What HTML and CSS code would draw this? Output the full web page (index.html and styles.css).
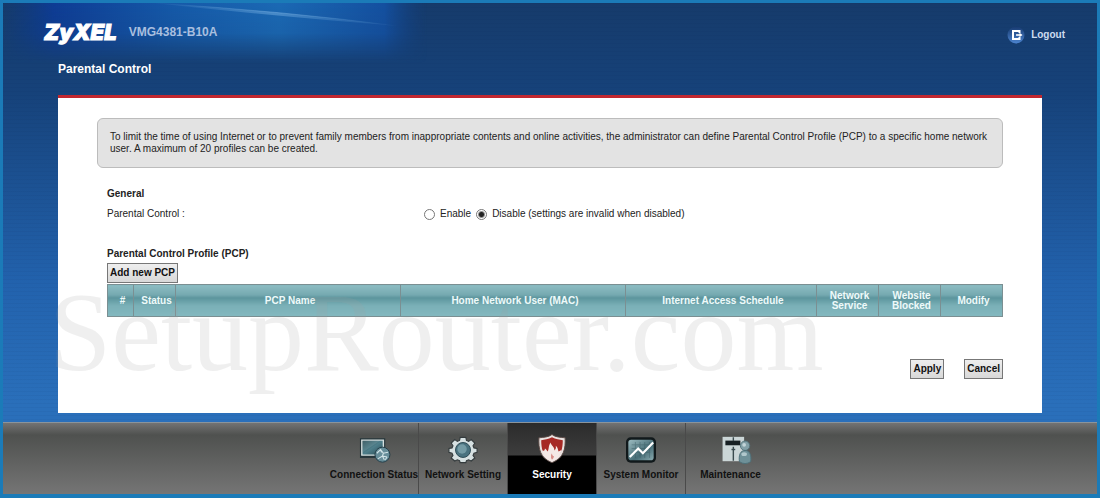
FILE: index.html
```
<!DOCTYPE html>
<html lang="en">
<head>
<meta charset="utf-8">
<title>VMG4381-B10A - Parental Control</title>
<link rel="stylesheet" href="styles.css">
</head>
<body>
<div class="frame">
  <header class="header">
    <svg class="glow" viewBox="0 0 424 60" preserveAspectRatio="none" aria-hidden="true">
      <defs>
        <linearGradient id="glowX" x1="0" x2="1" y1="0" y2="0">
          <stop offset="0" stop-color="#0b3a8c" stop-opacity="0"/>
          <stop offset=".12" stop-color="#0e3c94"/>
          <stop offset=".4" stop-color="#1559a8"/>
          <stop offset=".65" stop-color="#1b69b4"/>
          <stop offset=".9" stop-color="#1450a0"/>
          <stop offset="1" stop-color="#123f80" stop-opacity="0"/>
        </linearGradient>
        <linearGradient id="glowY" x1="0" x2="0" y1="0" y2="1">
          <stop offset="0" stop-color="#fff"/>
          <stop offset=".5" stop-color="#ddd"/>
          <stop offset="1" stop-color="#000"/>
        </linearGradient>
        <linearGradient id="ray" gradientUnits="userSpaceOnUse" x1="150" x2="395" y1="0" y2="0">
          <stop offset="0" stop-color="#7db4e4" stop-opacity="0"/>
          <stop offset=".5" stop-color="#7db4e4" stop-opacity=".45"/>
          <stop offset="1" stop-color="#7db4e4" stop-opacity="0"/>
        </linearGradient>
        <mask id="fade"><rect width="424" height="60" fill="url(#glowY)"/></mask>
      </defs>
      <rect width="424" height="60" fill="url(#glowX)" mask="url(#fade)"/>
      <path d="M150 0Q280 8 395 23Q280 14 150 0Z" fill="url(#ray)"/>
      <path d="M150 0Q280 8 395 23" fill="none" stroke="url(#ray)" stroke-width="1"/>
    </svg>
    <div class="brand">
      <span class="logo">ZyXEL</span>
      <span class="model">VMG4381-B10A</span>
    </div>
    <a class="logout" href="#">
      <svg width="18" height="18" viewBox="0 0 18 18" aria-hidden="true">
        <defs><linearGradient id="ball" x1="0" x2="0" y1="0" y2="1"><stop offset="0" stop-color="#173a70"/><stop offset="1" stop-color="#4c84cf"/></linearGradient></defs>
        <circle cx="9" cy="9" r="8.500" fill="url(#ball)"/>
        <path d="M12.500 7V5H6V13H12.500V11" fill="none" stroke="#fff" stroke-width="2"/>
        <path d="M9 9H13" stroke="#fff" stroke-width="1.600"/>
        <path d="M12.500 6.800L15.500 9L12.500 11.200Z" fill="#fff"/>
      </svg>
      <span>Logout</span>
    </a>
    <h1 class="title">Parental Control</h1>
  </header>

  <main class="panel">
    <p class="info">To limit the time of using Internet or to prevent family members from inappropriate contents and online activities, the administrator can define Parental Control Profile (PCP) to a specific home network user. A maximum of 20 profiles can be created.</p>
    <form class="form">
      <h2 class="heading">General</h2>
      <div class="row" role="radiogroup" aria-labelledby="pc-label">
        <span id="pc-label">Parental Control :</span>
        <div class="options">
          <input class="radio" type="radio" id="enable" name="pc"><label for="enable">Enable</label>
          <input class="radio" type="radio" id="disable" name="pc" checked><label for="disable">Disable (settings are invalid when disabled)</label>
        </div>
      </div>
      <h2 class="heading">Parental Control Profile (PCP)</h2>
      <button class="button add" type="button">Add new PCP</button>
      <table class="table">
        <colgroup>
          <col class="col-num"><col class="col-status"><col class="col-wide"><col class="col-wide"><col class="col-schedule"><col class="col-small"><col class="col-small"><col class="col-small">
        </colgroup>
        <thead>
          <tr><th>#</th><th>Status</th><th>PCP Name</th><th>Home Network User (MAC)</th><th>Internet Access Schedule</th><th>Network Service</th><th>Website Blocked</th><th>Modify</th></tr>
        </thead>
      </table>
      <div class="actions">
        <button class="button" type="submit">Apply</button>
        <button class="button" type="reset">Cancel</button>
      </div>
    </form>
  </main>
  <div class="watermark">SetupRouter.com</div>

  <nav class="nav">
    <a class="item" href="#">
      <svg class="icon" viewBox="0 0 32 32" aria-hidden="true">
        <defs><linearGradient id="teal" x1="0" x2="1" y1="0" y2="1"><stop offset="0" stop-color="#1f3a42"/><stop offset=".5" stop-color="#4e7f8b"/><stop offset="1" stop-color="#26454e"/></linearGradient></defs>
        <path d="M1 4H28V25H1Z" fill="#26363b"/>
        <path d="M3 6H26V22H3Z" fill="url(#teal)" stroke="#d5dfdf" stroke-width="1.500"/>
        <path d="M4 7H22L4 19Z" fill="#86adb4" opacity=".3"/>
        <circle cx="25" cy="21.500" r="8" fill="#668d99" stroke="#213b45"/>
        <path d="M19 20l4-4 3 4 5-1M20 26l5-3 2 4M26 20l-1 3 5 1M23 16l1 3M28 27l2-3" fill="none" stroke="#d2e4e8" stroke-width="1.200"/>
      </svg>
      <span>Connection Status</span>
    </a>
    <a class="item" href="#">
      <svg class="icon" viewBox="0 0 32 32" aria-hidden="true">
        <path d="M13 3h6l.7 3.300 2.300 1 2.800-1.900 3.800 3.800-1.900 2.800 1 2.300L31 15v4l-3.300 1-1 2.300 1.900 2.800-3.800 3.200-2.800-1.300-2.300 1L19 30h-6l-.7-2-2.300-1-2.800 1.300-3.800-3.200 1.900-2.800-1-2.300L1 19v-4l3.300-.7 1-2.300-1.900-2.800 3.800-3.800L10 7.300l2.300-1Z" fill="#d6e0e1" stroke="#343b3d" stroke-width="1.200"/>
        <circle cx="16" cy="16.500" r="8" fill="#49727f" stroke="#2b4852"/>
        <circle cx="15" cy="15.500" r="5" fill="#9fc3cc" opacity=".5"/>
      </svg>
      <span>Network Setting</span>
    </a>
    <a class="item active" href="#" aria-current="page">
      <svg class="icon" viewBox="0 0 32 32" aria-hidden="true">
        <path d="M16 0C20 3 25 3 30 3.500C30.500 15 29 25 16 30C3 25 1.500 15 2 3.500C7 3 12 3 16 0Z" fill="#e8e1df" stroke="#594642"/>
        <path d="M16 3C20 5 24 5.500 27.500 6C27.500 15 26 23 16 27C6 23 4.500 15 4.500 6C8 5.500 12 5 16 3Z" fill="#a62925"/>
        <path d="M16 29C9 26 6.500 22 5.500 17C8 18 8 17 8.500 15C10 16 11 18 11.500 18C13 15 12 12 14.500 8.500C15 12 19 13 18.500 17C20 16 20.500 14 20 12C22.500 14 22.500 17 23 18L26 16.500C25.500 21 23 26 16 29Z" fill="#f4e9e6"/>
        <path d="M15 25q-1-3 1-5q0 3 2 3q0 3-2 4Z" fill="#d98e88"/>
      </svg>
      <span>Security</span>
    </a>
    <a class="item" href="#">
      <svg class="icon" viewBox="0 0 32 32" aria-hidden="true">
        <defs><linearGradient id="screen" x1="0" x2="1" y1="0" y2="1"><stop offset="0" stop-color="#9ebdc2"/><stop offset=".6" stop-color="#476d76"/><stop offset="1" stop-color="#8aabb0"/></linearGradient></defs>
        <rect x="0" y="3" width="32" height="27" rx="5" fill="#11191b"/>
        <rect x="2.500" y="5.500" width="27" height="22" rx="3" fill="url(#screen)"/>
        <path d="M6 11H26M6 15H26M6 19H26M10 8V25M15 8V25M20 8V25M25 8V25" stroke="#2f5058" opacity=".4"/>
        <path d="M4 24L13 15L18 20L29 8.500" fill="none" stroke="#fff" stroke-width="2.400"/>
      </svg>
      <span>System Monitor</span>
    </a>
    <a class="item" href="#">
      <svg class="icon" viewBox="0 0 32 32" aria-hidden="true">
        <rect x="7" y="2.500" width="23" height="26" fill="#cbd6d7"/>
        <path d="M10 6.500H26V11.500H10Z" fill="#172023"/>
        <path d="M18.500 3V7M18.500 13V28" stroke="#3b4b4f" stroke-width="1.500"/>
        <path d="M16.500 16H20.500" stroke="#3b4b4f" stroke-width="1.500"/>
        <circle cx="31" cy="12" r="5" fill="#83a0a7" stroke="#53737b"/>
        <path d="M31 17C36 17 38 22 37 29Q31 33 25 29C24 22 26 17 31 17Z" fill="#6e9098" stroke="#4d6f77"/>
        <circle cx="30" cy="11" r="2" fill="#c2d4d8"/>
        <ellipse cx="30" cy="21" rx="3" ry="2" fill="#b0c7cc"/>
      </svg>
      <span>Maintenance</span>
    </a>
  </nav>
</div>
</body>
</html>
```
FILE: styles.css
```
* { box-sizing: border-box; }

body {
  margin: 0;
  font: 10px/12px "Liberation Sans", Arial, sans-serif;
  color: #222;
}

.frame {
  position: relative;
  display: flex;
  flex-direction: column;
  min-height: 100vh;
  border: 3px solid #1b7bb8;
  border-bottom-width: 4px;
  background:
    repeating-linear-gradient(rgba(0, 20, 60, .04) 0 1px, transparent 1px 4px),
    linear-gradient(#163b6b 0, #16427a 90px, #2262ad 280px, #2a6fba 400px);
}

.header {
  position: relative;
  display: grid;
  grid-template-columns: 1fr auto;
  align-items: center;
  row-gap: 14px;
  padding: 16px 32px 16px 41px;
}

.glow {
  position: absolute;
  top: 0;
  left: 0;
  width: 424px;
  height: 60px;
}

.brand {
  position: relative;
  display: flex;
  align-items: center;
  gap: 12px;
}

.logo {
  font: italic 900 22px/26px Inter, "Liberation Sans", sans-serif;
  color: #fff;
  -webkit-text-stroke: 1px #fff;
}

.model {
  font-size: 12px;
  font-weight: bold;
  color: #a9bfdf;
}

.logout {
  position: relative;
  display: flex;
  align-items: center;
  gap: 6px;
  padding-top: 5px;
  font-weight: bold;
  color: #cddcf0;
  text-decoration: none;
}

.title {
  grid-column: 1 / -1;
  margin: 0 0 0 14px;
  font-size: 12px;
  line-height: 20px;
  color: #fff;
}

.panel {
  flex: 1;
  margin: 0 55px 9px;
  padding: 20px 39px 34px;
  border-top: 3px solid #c2272f;
  background: #fff;
}

.info {
  margin: 0;
  padding: 12px 6px 12px 12px;
  border: 1px solid #bcbcbc;
  border-radius: 6px;
  background: #e3e3e3;
}

.form {
  padding: 19px 0 0 10px;
}

.heading {
  margin: 0;
  font-size: 10px;
  line-height: 14px;
}

.row {
  display: flex;
  align-items: center;
  margin: 7px 0 27px;
}

.row > span {
  flex: 0 0 317px;
}

.options {
  display: flex;
  align-items: center;
  gap: 5px;
}

.radio {
  appearance: none;
  width: 11px;
  height: 11px;
  margin: 0;
  border: 1px solid #777;
  border-radius: 50%;
  background: #fff;
}

.radio:checked {
  background: radial-gradient(circle, #222 0 2px, #fff 4px);
}

.button {
  height: 20px;
  padding: 0 2px;
  border: 1px solid #777;
  background: linear-gradient(#eee, #d8d8d8);
  font: bold 10px/12px "Liberation Sans", Arial, sans-serif;
  color: #111;
}

.add { margin-top: 2px; }

.table {
  width: 100%;
  margin-top: 1px;
  border-collapse: collapse;
  table-layout: fixed;
}

.table th {
  height: 32px;
  padding: 0 0 0 4px;
  border: 1px solid #7b8f92;
  background: linear-gradient(#8cbcc2 0, #76aab1 30%, #5c959d 40%, #7ab0b7 65%, #83b8bf);
  font-size: 10px;
  line-height: 10px;
  color: #eefafa;
}

.col-num { width: 26px; }
.col-status { width: 42px; }
.col-schedule { width: 191px; }
.col-small { width: 62px; }

.actions {
  display: flex;
  justify-content: flex-end;
  gap: 20px;
  margin-top: 42px;
}

.watermark {
  position: absolute;
  top: 274px;
  left: 46px;
  font: 112px/110px "Liberation Serif", "Times New Roman", serif;
  color: rgba(160, 160, 160, .17);
  pointer-events: none;
}

.nav {
  display: flex;
  justify-content: center;
  padding-left: 5px;
  border-top: 1px solid #8a949c;
  background: linear-gradient(#737373 0, #4f514f 12px, #757575);
}

.item {
  display: flex;
  flex-direction: column;
  align-items: center;
  gap: 4px;
  width: 89px;
  padding: 11px 0 13px;
  border-right: 1px solid #4a4a4a;
  font-weight: bold;
  color: #111;
  text-decoration: none;
  white-space: nowrap;
}

.item:last-child { border-right: 0; }

.item.active {
  background: linear-gradient(#2b2b2b 0, #3d3d3d 32px, #000 33px);
  color: #fff;
}

.icon {
  width: 30px;
  height: 31px;
  overflow: visible;
}
```
